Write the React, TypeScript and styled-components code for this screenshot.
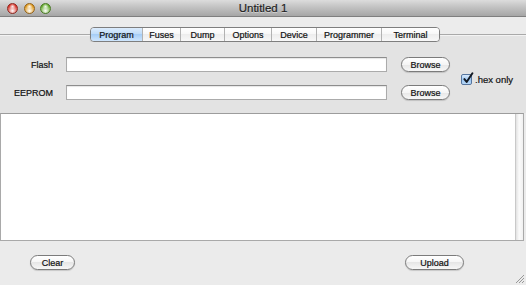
import React from "react";
import styled, { createGlobalStyle } from "styled-components";

const GlobalStyle = createGlobalStyle`
  html, body {
    margin: 0;
    padding: 0;
    width: 526px;
    height: 285px;
    overflow: hidden;
    background: #ebebeb;
  }
  body {
    font-family: "Liberation Sans", Arial, sans-serif;
    color: #111;
    -webkit-text-stroke: 0.2px currentColor;
  }
`;

const Window = styled.div`
  position: relative;
  width: 526px;
  height: 285px;
  display: flex;
  flex-direction: column;
  background: #ebebeb;
  overflow: hidden;
`;

const TitleBar = styled.div`
  height: 16px;
  border-bottom: 1px solid #7f7f7f;
  background: linear-gradient(#dcdcdc, #c2c2c2 45%, #a6a6a6);
  display: grid;
  grid-template-columns: 1fr auto 1fr;
  align-items: center;
`;

const Lights = styled.div`
  display: flex;
  gap: 5.5px;
  padding-left: 7px;
`;

const Light = styled.span<{ $tone: string; $edge: string }>`
  width: 11px;
  height: 11px;
  border-radius: 50%;
  box-sizing: border-box;
  border: 1px solid ${(p) => p.$edge};
  background: radial-gradient(
      circle at 50% 28%,
      rgba(255, 255, 255, 0.85) 0,
      rgba(255, 255, 255, 0) 38%
    ),
    radial-gradient(circle at 50% 75%, #ffffff 0, ${(p) => p.$tone} 70%);
`;

const Title = styled.div`
  font-size: 11.5px;
  color: #1e1e1e;
  text-shadow: 0 1px 0 rgba(255, 255, 255, 0.45);
  line-height: 16px;
`;

const TabBar = styled.div`
  height: 25px;
  box-sizing: border-box;
  padding: 10px 0 0 90px;
  background: linear-gradient(
    to bottom,
    #ececec 0,
    #ececec 17px,
    #a9a9a9 17px,
    #a9a9a9 18px,
    #f3f3f3 18px,
    #f3f3f3 19px,
    #e3e3e3 19px
  );
`;

const TabGroup = styled.div`
  display: flex;
  width: 350px;
  height: 15px;
  box-sizing: border-box;
  border: 1px solid #7e7e7e;
  border-radius: 4px;
  overflow: hidden;
  box-shadow: 0 1px 1px rgba(0, 0, 0, 0.12);
`;

const Tab = styled.div<{ $w: number; $active?: boolean }>`
  width: ${(p) => p.$w}px;
  box-sizing: border-box;
  display: flex;
  align-items: center;
  justify-content: center;
  font-size: 9px;
  color: #111;
  & + & {
    border-left: 1px solid #b2b2b2;
  }
  background: ${(p) =>
    p.$active
      ? "linear-gradient(#dcecfd, #bcdaf8 50%, #a6cdf6 50%, #cfe6fd)"
      : "linear-gradient(#ffffff, #f7f7f7 50%, #ededed 50%, #f8f8f8)"};
`;

const FormArea = styled.div`
  height: 71px;
  box-sizing: border-box;
  padding-top: 15px;
  background: #e3e3e3;
  display: grid;
  grid-template-columns: 66px 335px 60px 1fr;
  grid-template-rows: 16px 16px;
  row-gap: 12px;
`;

const Label = styled.div`
  font-size: 9px;
  text-align: right;
  padding-right: 13px;
  line-height: 16px;
`;

const Field = styled.div`
  width: 321px;
  height: 15px;
  box-sizing: border-box;
  background: #fff;
  border: 1px solid #ababab;
  border-top-color: #8d8d8d;
  box-shadow: inset 0 1px 1px rgba(0, 0, 0, 0.1);
`;

const PillButton = styled.div<{ $w: number }>`
  width: ${(p) => p.$w}px;
  height: 15px;
  box-sizing: border-box;
  border: 1px solid #7b7b7b;
  border-radius: 8px;
  background: linear-gradient(#ffffff, #f5f5f5 50%, #e6e6e6 50%, #f7f7f7);
  box-shadow: 0 1px 1px rgba(0, 0, 0, 0.15);
  display: flex;
  align-items: center;
  justify-content: center;
  font-size: 9px;
  color: #111;
`;

const CheckCell = styled.label`
  grid-column: 4;
  grid-row: 1 / span 2;
  align-self: center;
  display: flex;
  align-items: center;
  gap: 3px;
  font-size: 9.5px;
`;

const CheckBox = styled.span`
  position: relative;
  width: 11px;
  height: 11px;
  box-sizing: border-box;
  border: 1px solid #56759e;
  border-radius: 2px;
  background: linear-gradient(#d8e9fb, #9cc6f2 55%, #b8d8f8);
  svg {
    position: absolute;
    left: 0;
    top: -3px;
  }
`;

const ScrollBox = styled.div`
  height: 128px;
  margin-right: 2px;
  box-sizing: border-box;
  border: 1px solid #a9a9a9;
  border-top-color: #9c9c9c;
  background: #fff;
  display: flex;
`;

const LogText = styled.div`
  flex: 1;
`;

const ScrollTrack = styled.div`
  width: 7px;
  border-left: 1px solid #c9c9c9;
  background: linear-gradient(to right, #e2e2e2, #fbfbfb 45%, #f0f0f0);
`;

const BottomBar = styled.div`
  flex: 1;
  display: flex;
  justify-content: space-between;
  align-items: flex-start;
  padding: 14px 62px 0 30px;
  background: #ebebeb;
`;

const Grip = styled.svg`
  position: absolute;
  right: 1px;
  bottom: 1px;
`;

const tabs = [
  { name: "Program", w: 51 },
  { name: "Fuses", w: 38 },
  { name: "Dump", w: 44 },
  { name: "Options", w: 47 },
  { name: "Device", w: 45 },
  { name: "Programmer", w: 65 },
  { name: "Terminal", w: 58 },
];

export default function App() {
  return (
    <>
      <GlobalStyle />
      <Window>
        <TitleBar>
          <Lights>
            <Light $tone="#d9372c" $edge="#8e2a22" />
            <Light $tone="#df9a1e" $edge="#94631a" />
            <Light $tone="#68ad31" $edge="#4b7a26" />
          </Lights>
          <Title>Untitled 1</Title>
          <div />
        </TitleBar>

        <TabBar>
          <TabGroup>
            {tabs.map((t, i) => (
              <Tab key={t.name} $w={t.w} $active={i === 0}>
                {t.name}
              </Tab>
            ))}
          </TabGroup>
        </TabBar>

        <FormArea>
          <Label>Flash</Label>
          <Field />
          <PillButton $w={49}>Browse</PillButton>
          <CheckCell>
            <CheckBox>
              <svg width="13" height="13" viewBox="0 0 12 12">
                <path
                  d="M2.2 6.6 L4.3 9.2 L9.6 1.2"
                  fill="none"
                  stroke="#141a24"
                  strokeWidth="1.8"
                  strokeLinecap="round"
                  strokeLinejoin="round"
                />
              </svg>
            </CheckBox>
            .hex only
          </CheckCell>
          <Label>EEPROM</Label>
          <Field />
          <PillButton $w={49}>Browse</PillButton>
        </FormArea>

        <ScrollBox>
          <LogText />
          <ScrollTrack />
        </ScrollBox>

        <BottomBar>
          <PillButton $w={45}>Clear</PillButton>
          <PillButton $w={59}>Upload</PillButton>
        </BottomBar>

        <Grip width="10" height="10" viewBox="0 0 10 10">
          <path d="M1 9 L9 1 M4 9 L9 4 M7 9 L9 7" stroke="#8f8f8f" strokeWidth="0.9" />
        </Grip>
      </Window>
    </>
  );
}
